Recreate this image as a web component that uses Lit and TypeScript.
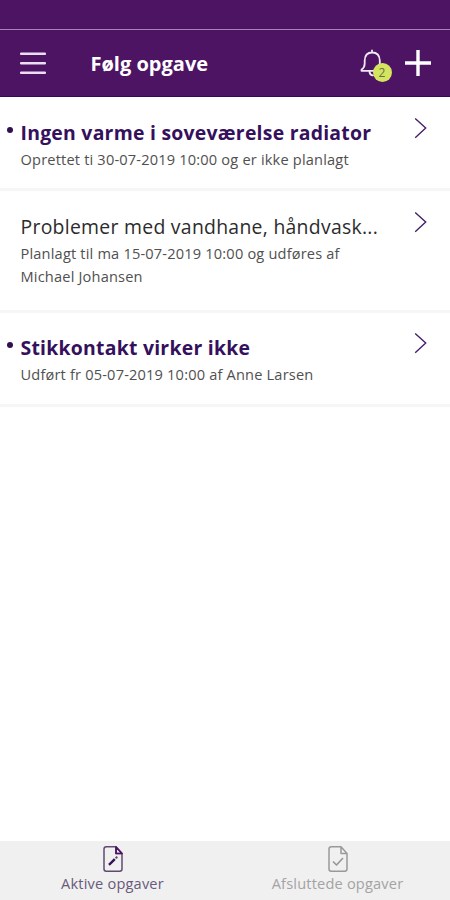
import { LitElement, html, css, svg } from "lit";
import { customElement, property } from "lit/decorators.js";

interface Task {
  title: string;
  detail: string[];
  unread: boolean;
  kind: string;
}

const tasks: Task[] = [
  { title: "Ingen varme i soveværelse radiator", detail: ["Oprettet ti 30-07-2019 10:00 og er ikke planlagt"], unread: true, kind: "first" },
  { title: "Problemer med vandhane, håndvask...", detail: ["Planlagt til ma 15-07-2019 10:00 og udføres af", "Michael Johansen"], unread: false, kind: "second" },
  { title: "Stikkontakt virker ikke", detail: ["Udført fr 05-07-2019 10:00 af Anne Larsen"], unread: true, kind: "third" },
];

@customElement("task-row")
export class TaskRow extends LitElement {
  @property({ attribute: false }) task!: Task;

  static styles = css`
    :host { display: block; }
    .row {
      box-sizing: border-box;
      display: grid;
      grid-template-columns: 20.5px 1fr 36.5px;
      border-bottom: 3px solid #f6f6f6;
      white-space: nowrap;
    }
    .first { height: 94px; padding-top: 22px; }
    .second { height: 122px; padding-top: 22px; }
    .third { height: 94px; padding-top: 21px; }
    .dot { width: 6px; height: 6px; border-radius: 50%; background: #301050; margin: 8px 0 0 7px; }
    .title { font-size: 19.4px; line-height: 28px; color: #2c2c2c; letter-spacing: 0.28px; }
    .unread .title { font-weight: 700; color: #35105c; letter-spacing: 0.25px; }
    .detail { font-size: 14.6px; line-height: 22.5px; color: #505050; margin-top: 1px; letter-spacing: 0.18px; }
    .chevron { display: block; margin-top: -3px; }
  `;

  render() {
    const t = this.task;
    return html`<div class="row ${t.kind} ${t.unread ? "unread" : ""}">
      <div>${t.unread ? html`<div class="dot"></div>` : ""}</div>
      <div>
        <div class="title"><span>${t.title}</span></div>
        <div class="detail">${t.detail.map((d) => html`<div><span>${d}</span></div>`)}</div>
      </div>
      <svg class="chevron" width="16" height="24" viewBox="0 0 16 24" fill="none" stroke="#45206a" stroke-width="1.4"><path d="M1.2 2.5 11.7 12.1 1.2 21.7" /></svg>
    </div>`;
  }
}

@customElement("app-root")
export class AppRoot extends LitElement {
  static styles = css`
    :host { display: flex; flex-direction: column; height: 900px; width: 450px; overflow: hidden; background: #fff; font-family: "Open Sans", sans-serif; }
    .status { height: 30px; background: #4e1464; border-bottom: 1px solid #a486b0; box-sizing: border-box; }
    .bar { height: 67px; box-sizing: border-box; background: #4e1464; color: #fff; display: flex; align-items: center; border-bottom: 1px solid #3b0554; padding-left: 20px; }
    .heading { margin: 1px 0 0 44.5px; font-size: 20px; font-weight: 700; line-height: 28px; width: 270px; white-space: nowrap; }
    .menu { display: block; }
    .bell { position: relative; width: 49px; height: 32px; margin-left: -5px; }
    .bell svg { display: block; }
    .badge { position: absolute; left: 17px; top: 16px; width: 19px; height: 19px; border-radius: 50%; background: #d5e45f; color: #65704a; font-size: 12px; line-height: 19px; text-align: center; }
    .menu, .plus, .heading, .bell { flex: none; }
    .list { flex: 1; }
    .tabs { height: 59px; display: grid; grid-template-columns: 1fr 1fr; background: #f0f0f0; }
    .tab { display: flex; flex-direction: column; align-items: center; padding-top: 4px; font-size: 14.6px; line-height: 20px; color: #69597b; white-space: nowrap; letter-spacing: 0.18px; }
    .tab svg { display: block; }
    .muted { color: #a3a3a3; }
  `;

  private doc(color: string, mark: unknown) {
    return html`<svg width="22" height="28" viewBox="0 0 22 28" fill="none" stroke=${color} stroke-width="1.5" stroke-linejoin="round">
      <path d="M14 1.7H4.3Q2 1.7 2 4V24Q2 26.2 4.3 26.2H17.7Q20 26.2 20 24V8.5L14 1.7V8.5H20" />${mark}
    </svg>`;
  }

  render() {
    return html`
      <div class="status"></div>
      <div class="bar">
        <svg class="menu" width="26" height="24" viewBox="0 0 26 24" stroke="#eadff0" stroke-width="2.4" stroke-linecap="round"><path d="M1 2.7H25M1 12.2H25M1 21.7H25" /></svg>
        <div class="heading"><span>Følg opgave</span></div>
        <div class="bell">
          <svg width="32" height="34" viewBox="0 0 32 34" fill="none" stroke="#f1e8f5" stroke-width="1.8" stroke-linecap="round" stroke-linejoin="round">
            <path d="M16 3.4V5.5M5.5 23.8H26.5Q23.3 21 23.8 17V13.5Q23.5 5.5 16.2 5.5T8.7 13.5V16.5Q8.7 20.5 5.5 22.7V23.8M13.5 25Q14 28.3 17 28.3" />
          </svg>
          <div class="badge"><span>2</span></div>
        </div>
        <svg class="plus" width="26" height="26" viewBox="0 0 26 26" stroke="#fff" stroke-width="3.4"><path d="M13 0V26M0 13H26" /></svg>
      </div>
      <div class="list">${tasks.map((t) => html`<task-row .task=${t}></task-row>`)}</div>
      <div class="tabs">
        <div class="tab">
          ${this.doc("#604a72", svg`<path d="M14 2V8.5H20Z" stroke="#4e1464" stroke-width="1.7"/><path d="M7 19.8 12.8 14.2" stroke="#35105c" stroke-width="2.4"/><path d="M13.7 13.3 15.3 11.8" stroke-width="2"/>`)}
          <span>Aktive opgaver</span>
        </div>
        <div class="tab muted">
          ${this.doc("#999", svg`<path d="M6 16.5 9.5 20 16 13" stroke-width="1.7"/>`)}
          <span>Afsluttede opgaver</span>
        </div>
      </div>
    `;
  }
}
